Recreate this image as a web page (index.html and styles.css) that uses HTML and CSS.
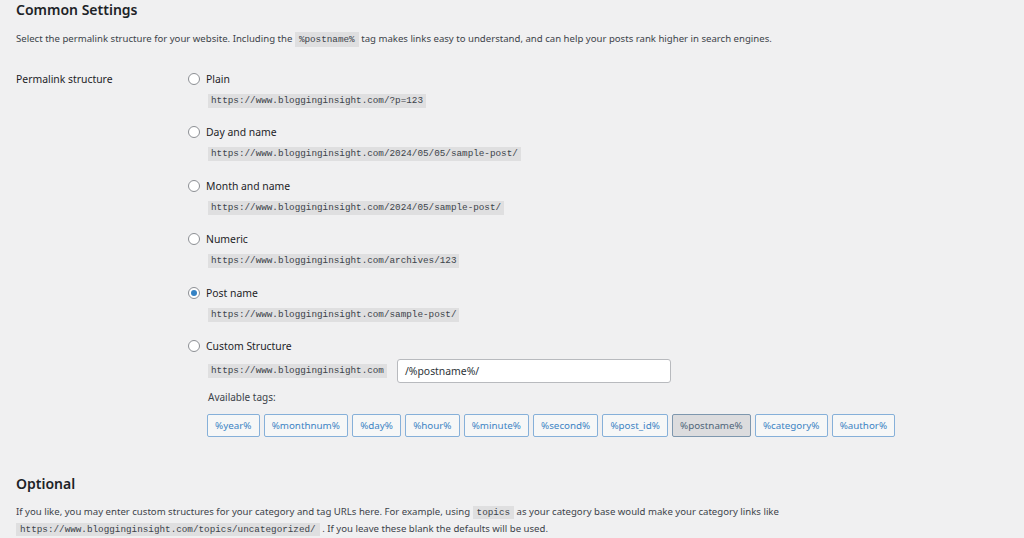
FILE: index.html
```html
<!DOCTYPE html>
<html>
<head>
  <meta charset="UTF-8">
  <title>Permalink Settings</title>
  <link rel="stylesheet" href="styles.css">
</head>
<body>
  <div class="wrap">
    <h2 class="title">Common Settings</h2>
    <p class="desc">Select the permalink structure for your website. Including the <code>%postname%</code> tag makes links easy to understand, and can help your posts rank higher in search engines.</p>

    <div class="form-row">
      <div class="row-label">Permalink structure</div>
      <div class="choices">
        <div class="choice">
          <label class="radio-line"><span class="radio"></span>Plain</label>
          <code class="sample">https://www.blogginginsight.com/?p=123</code>
        </div>
        <div class="choice">
          <label class="radio-line"><span class="radio"></span>Day and name</label>
          <code class="sample">https://www.blogginginsight.com/2024/05/05/sample-post/</code>
        </div>
        <div class="choice">
          <label class="radio-line"><span class="radio"></span>Month and name</label>
          <code class="sample">https://www.blogginginsight.com/2024/05/sample-post/</code>
        </div>
        <div class="choice">
          <label class="radio-line"><span class="radio"></span>Numeric</label>
          <code class="sample">https://www.blogginginsight.com/archives/123</code>
        </div>
        <div class="choice">
          <label class="radio-line"><span class="radio checked"></span>Post name</label>
          <code class="sample">https://www.blogginginsight.com/sample-post/</code>
        </div>
        <div class="choice custom">
          <label class="radio-line"><span class="radio"></span>Custom Structure</label>
          <div class="custom-row">
            <code class="sample">https://www.blogginginsight.com</code>
            <div class="text-input">/%postname%/</div>
          </div>
          <div class="tags-label">Available tags:</div>
          <div class="tags">
            <span class="tag">%year%</span>
            <span class="tag">%monthnum%</span>
            <span class="tag">%day%</span>
            <span class="tag">%hour%</span>
            <span class="tag">%minute%</span>
            <span class="tag">%second%</span>
            <span class="tag">%post_id%</span>
            <span class="tag active">%postname%</span>
            <span class="tag">%category%</span>
            <span class="tag">%author%</span>
          </div>
        </div>
      </div>
    </div>

    <h2 class="title optional">Optional</h2>
    <p class="desc small">If you like, you may enter custom structures for your category and tag URLs here. For example, using <code>topics</code> as your category base would make your category links like<br><code>https://www.blogginginsight.com/topics/uncategorized/</code> . If you leave these blank the defaults will be used.</p>
  </div>
</body>
</html>
```

FILE: styles.css
```css
body {
  margin: 0;
  background-color: #f0f0f1;
  color: #3c434a;
  font-family: "Noto Sans", "Open Sans", sans-serif;
  font-size: 9.6px;
}
.wrap {
  padding: 0 16px;
}
.title {
  margin: 0;
  padding-top: 1px;
  font-size: 14px;
  font-weight: 600;
  line-height: 18px;
  color: #1d2327;
}
.desc {
  margin: 11px 0 0;
  line-height: 17px;
}
code {
  font-family: "Liberation Mono", "DejaVu Sans Mono", monospace;
  font-size: 9.3px;
  line-height: 1;
  background-color: #dfdfe0;
  padding: 2px 4px;
}
.form-row {
  display: grid;
  grid-template-columns: 172px 1fr;
  margin-top: 23.5px;
}
.row-label {
  line-height: 16px;
  color: #1d2327;
  font-size: 10.4px;
}
.choice {
  padding-bottom: 16.5px;
}
.radio-line {
  display: flex;
  align-items: center;
  gap: 6px;
  height: 16px;
  color: #1d2327;
  font-size: 10.4px;
}
.radio {
  box-sizing: border-box;
  width: 12px;
  height: 12px;
  border: 1px solid #8c8f94;
  border-radius: 50%;
  background-color: #fff;
  display: flex;
  align-items: center;
  justify-content: center;
}
.radio.checked::before {
  content: "";
  width: 6px;
  height: 6px;
  border-radius: 50%;
  background-color: #3582c4;
}
.sample {
  display: inline-block;
  margin: 7px 0 0 20px;
  padding: 0 3px;
  line-height: 14px;
}
.custom-row {
  display: flex;
  align-items: center;
  gap: 10px;
  margin: 5px 0 0 20px;
}
.custom-row .sample {
  margin: 0;
}
.text-input {
  box-sizing: border-box;
  width: 274px;
  height: 24px;
  background-color: #fff;
  border: 1px solid #b8babe;
  border-radius: 3px;
  padding: 0 7px;
  line-height: 22px;
  font-size: 10.4px;
  color: #2c3338;
}
.tags-label {
  margin: 7px 0 0 20px;
  line-height: 14px;
  font-size: 10px;
}
.tags {
  display: flex;
  gap: 4px;
  margin: 10px 0 0 19px;
}
.tag {
  box-sizing: border-box;
  height: 23px;
  line-height: 21px;
  padding: 0 7.1px;
  border: 1px solid #86b0d9;
  border-radius: 2px;
  background-color: #f6f7f7;
  color: #3d84c4;
  font-size: 9.8px;
}
.tag.active {
  background-color: #dcdcde;
  border-color: #7e97ae;
  color: #4f6579;
}
.optional {
  margin-top: 20px;
}
.desc.small {
  margin-top: 10px;
}
.desc.small code {
  padding: 1px 4px;
}
```
